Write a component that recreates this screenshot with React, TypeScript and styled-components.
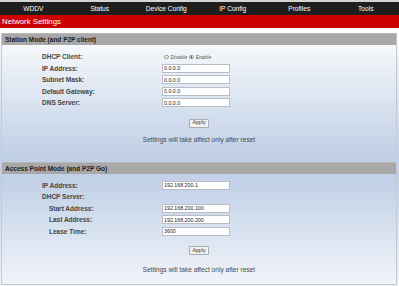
import React from "react";
import styled, { createGlobalStyle } from "styled-components";

const Global = createGlobalStyle`
  html, body { margin: 0; padding: 0; background: #ffffff; }
  body { font-family: "Liberation Sans", Arial, sans-serif; }
  * { box-sizing: border-box; }
`;

const Page = styled.div`
  width: 399px;
  height: 286px;
  overflow: hidden;
  background: linear-gradient(
    to bottom,
    #ffffff 0px,
    #ffffff 30px,
    #f3f6fa 50px,
    #bfcfe6 158px,
    #c3d2e8 185px,
    #f2f5fa 286px
  );
`;

const Nav = styled.nav`
  display: grid;
  grid-template-columns: repeat(6, 1fr);
  height: 15px;
  background: #1e1e1e;
  border-top: 2px solid #d4d4d4;
`;

const NavItem = styled.div`
  display: flex;
  align-items: center;
  justify-content: center;
  color: #ffffff;
  font-size: 6.6px;
`;

const TitleBar = styled.div`
  height: 13px;
  background: #cc0000;
  color: #ffffff;
  font-size: 7.8px;
  display: flex;
  align-items: center;
  padding-left: 2px;
`;

const Content = styled.div`
  display: flex;
  flex-direction: column;
  gap: 7px;
  padding: 5px 2px 0 1px;
`;

const Section = styled.section`
  border: 1px solid #c4c8cf;
  border-top: none;
`;

const SectionHeader = styled.div`
  height: 12px;
  background: #a8a8a8;
  border-top: 1px solid #b8b8b8;
  color: #1c1c1c;
  font-weight: bold;
  font-size: 6.5px;
  display: flex;
  align-items: center;
  padding-left: 3px;
`;

const SectionBody = styled.div<{ $bottom: number }>`
  padding: 6px 0 ${(p) => p.$bottom}px 0;
  display: flex;
  flex-direction: column;
  align-items: stretch;
`;

const Row = styled.div`
  display: grid;
  grid-template-columns: 160px 1fr;
  height: 11.5px;
  align-items: center;
`;

const Label = styled.div<{ $indent?: boolean }>`
  padding-left: ${(p) => (p.$indent ? 47 : 40)}px;
  font-size: 6.5px;
  font-weight: bold;
  color: #444444;
  white-space: nowrap;
`;

const TextInput = styled.input`
  width: 68px;
  height: 9px;
  border: 1px solid #b9bcc2;
  background: #ffffff;
  font-family: "Liberation Sans", Arial, sans-serif;
  font-size: 5.3px;
  color: #222;
  padding: 0 1px;
  margin: 0;
  outline: none;
`;

const RadioGroup = styled.div`
  display: flex;
  align-items: center;
  gap: 2px;
  padding-left: 2px;
  font-size: 5px;
  font-style: italic;
  color: #555;
`;

const Radio = styled.span<{ $checked?: boolean }>`
  display: inline-block;
  width: 4.5px;
  height: 4.5px;
  border-radius: 50%;
  border: 0.8px solid #999;
  background: ${(p) =>
    p.$checked ? "radial-gradient(circle, #666 0 35%, #eee 45%)" : "#f4f4f4"};
`;

const ButtonRow = styled.div<{ $top: number }>`
  display: flex;
  justify-content: center;
  margin-top: ${(p) => p.$top}px;
`;

const ApplyButton = styled.button`
  width: 20px;
  height: 9px;
  padding: 0;
  margin: 0;
  background: #f2f2f2;
  border: 1px solid #a9adb3;
  border-radius: 1px;
  font-family: "Liberation Sans", Arial, sans-serif;
  font-size: 5.3px;
  color: #333;
  line-height: 1;
`;

const Note = styled.div<{ $top: number }>`
  margin-top: ${(p) => p.$top}px;
  text-align: center;
  font-size: 6.6px;
  line-height: 8px;
  color: #4a4a4a;
`;

const navItems = ["WDDV", "Status", "Device Config", "IP Config", "Profiles", "Tools"];

export default function App() {
  return (
    <>
      <Global />
      <Page>
        <Nav>
          {navItems.map((n) => (
            <NavItem key={n}>{n}</NavItem>
          ))}
        </Nav>
        <TitleBar>Network Settings</TitleBar>
        <Content>
          <Section>
            <SectionHeader>Station Mode (and P2P client)</SectionHeader>
            <SectionBody $bottom={10}>
              <Row>
                <Label>DHCP Client:</Label>
                <RadioGroup>
                  <Radio />
                  <span>Disable</span>
                  <Radio $checked />
                  <span>Enable</span>
                </RadioGroup>
              </Row>
              <Row>
                <Label>IP Address:</Label>
                <TextInput defaultValue="0.0.0.0" />
              </Row>
              <Row>
                <Label>Subnet Mask:</Label>
                <TextInput defaultValue="0.0.0.0" />
              </Row>
              <Row>
                <Label>Default Gateway:</Label>
                <TextInput defaultValue="0.0.0.0" />
              </Row>
              <Row>
                <Label>DNS Server:</Label>
                <TextInput defaultValue="0.0.0.0" />
              </Row>
              <ButtonRow $top={10}>
                <ApplyButton>Apply</ApplyButton>
              </ButtonRow>
              <Note $top={8}>Settings will take affect only after reset</Note>
            </SectionBody>
          </Section>
          <Section>
            <SectionHeader>Access Point Mode (and P2P Go)</SectionHeader>
            <SectionBody $bottom={10}>
              <Row>
                <Label>IP Address:</Label>
                <TextInput defaultValue="192.168.200.1" />
              </Row>
              <Row>
                <Label>DHCP Server:</Label>
                <span />
              </Row>
              <Row>
                <Label $indent>Start Address:</Label>
                <TextInput defaultValue="192.168.200.100" />
              </Row>
              <Row>
                <Label $indent>Last Address:</Label>
                <TextInput defaultValue="192.168.200.200" />
              </Row>
              <Row>
                <Label $indent>Lease Time:</Label>
                <TextInput defaultValue="3600" />
              </Row>
              <ButtonRow $top={9}>
                <ApplyButton>Apply</ApplyButton>
              </ButtonRow>
              <Note $top={11}>Settings will take affect only after reset</Note>
            </SectionBody>
          </Section>
        </Content>
      </Page>
    </>
  );
}
